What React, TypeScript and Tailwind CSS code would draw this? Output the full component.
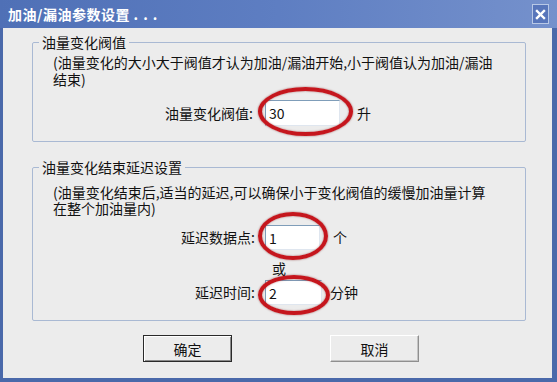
import React from "react";

function Ellipse({ cls }: { cls: string }) {
  return (
    <div
      className={`absolute rounded-[50%] border-[4px] border-[#c5161d] shadow-[0_0_2px_rgba(110,0,0,0.6),inset_0_0_2px_rgba(110,0,0,0.5)] pointer-events-none ${cls}`}
    />
  );
}

function Input({ value, w, h, ellipse }: { value: string; w: string; h: string; ellipse: string }) {
  return (
    <div className={`relative shrink-0 ${w} ${h}`}>
      <div className="w-full h-full bg-white border-t border-l border-[#7f9db9] border-r border-b border-r-[#dfe6ef] border-b-[#dfe6ef] flex items-center pl-[3px] text-[14px] leading-[16px]">
        {value}
      </div>
      <Ellipse cls={ellipse} />
    </div>
  );
}

export default function App() {
  return (
    <div className="w-[557px] h-[382px] bg-[#4a69aa] flex flex-col font-['Noto_Sans_CJK_SC','Liberation_Sans',sans-serif] text-[#111]">
      <div className="h-[28px] shrink-0 flex items-center justify-between pl-[8px] pr-[8px] bg-gradient-to-r from-[#4f70b6] via-[#5e7ec2] to-[#7591cc]">
        <span className="text-white font-bold text-[14px] leading-[20px] tracking-[0.5px]">
          加油/漏油参数设置 <span className="tracking-[5px]">...</span>
        </span>
        <div className="w-[17px] h-[20px] border border-[#b8c8e6] bg-[#5876bb] flex items-center justify-center">
          <svg width="11" height="11" viewBox="0 0 11 11">
            <path d="M2 2 L9 9 M9 2 L2 9" stroke="white" strokeWidth="2.4" strokeLinecap="square" />
          </svg>
        </div>
      </div>
      <div className="flex-1 ml-[3px] mr-[5px] mb-[4px] bg-[#ececec] pl-[29px] pr-[26px] pt-[5px] flex flex-col">
        <fieldset className="border border-[#a9b9d3] rounded-[2px] pb-[15px]">
          <legend className="ml-[6px] px-[3px] text-[14px] leading-[18px]">油量变化阀值</legend>
          <div className="pl-[20px] pt-[3px] text-[14px] leading-[17px]">
            <div>(油量变化的大小大于阀值才认为加油/漏油开始,小于阀值认为加油/漏油</div>
            <div>结束)</div>
          </div>
          <div className="flex items-center mt-[12px] h-[26px] text-[14px]">
            <div className="w-[220px] text-right">油量变化阀值:</div>
            <div className="ml-[12px]">
              <Input value="30" w="w-[75px]" h="h-[26px]" ellipse="left-[-7px] top-[-13px] w-[95px] h-[49px]" />
            </div>
            <div className="ml-[17px]">升</div>
          </div>
        </fieldset>
        <fieldset className="border border-[#a9b9d3] rounded-[2px] pb-[15px] mt-[16px]">
          <legend className="ml-[6px] px-[3px] text-[14px] leading-[18px]">油量变化结束延迟设置</legend>
          <div className="pl-[20px] pt-[8px] text-[14px] leading-[16px]">
            <div>(油量变化结束后,适当的延迟,可以确保小于变化阀值的缓慢加油量计算</div>
            <div>在整个加油量内)</div>
          </div>
          <div className="flex items-center mt-[9px] h-[25px] text-[14px]">
            <div className="w-[222px] text-right">延迟数据点:</div>
            <div className="ml-[10px]">
              <Input value="1" w="w-[55px]" h="h-[25px]" ellipse="left-[-7px] top-[-13px] w-[70px] h-[48px]" />
            </div>
            <div className="ml-[13px]">个</div>
          </div>
          <div className="mt-[9px] pl-[239px] text-[14px] leading-[18px]">或</div>
          <div className="flex items-center mt-[3px] h-[25px] text-[14px]">
            <div className="w-[222px] text-right">延迟时间:</div>
            <div className="ml-[10px]">
              <Input value="2" w="w-[57px]" h="h-[25px]" ellipse="left-[-7px] top-[-5px] w-[72px] h-[40px]" />
            </div>
            <div className="ml-[8px]">分钟</div>
          </div>
        </fieldset>
        <div className="flex mt-[14px] pl-[111px] gap-[98px]">
          <button className="w-[89px] h-[27px] border border-[#2a2a2a] bg-[#ececec] text-[14px] leading-[16px] shadow-[inset_1px_1px_0_#ffffff,inset_-1px_-1px_0_#8a8a8a]">
            确定
          </button>
          <button className="w-[89px] h-[27px] bg-[#ececec] text-[14px] leading-[16px] border border-t-[#ffffff] border-l-[#ffffff] border-r-[#8f8f8f] border-b-[#8f8f8f] shadow-[inset_-1px_-1px_0_#c4c4c4]">
            取消
          </button>
        </div>
      </div>
    </div>
  );
}
